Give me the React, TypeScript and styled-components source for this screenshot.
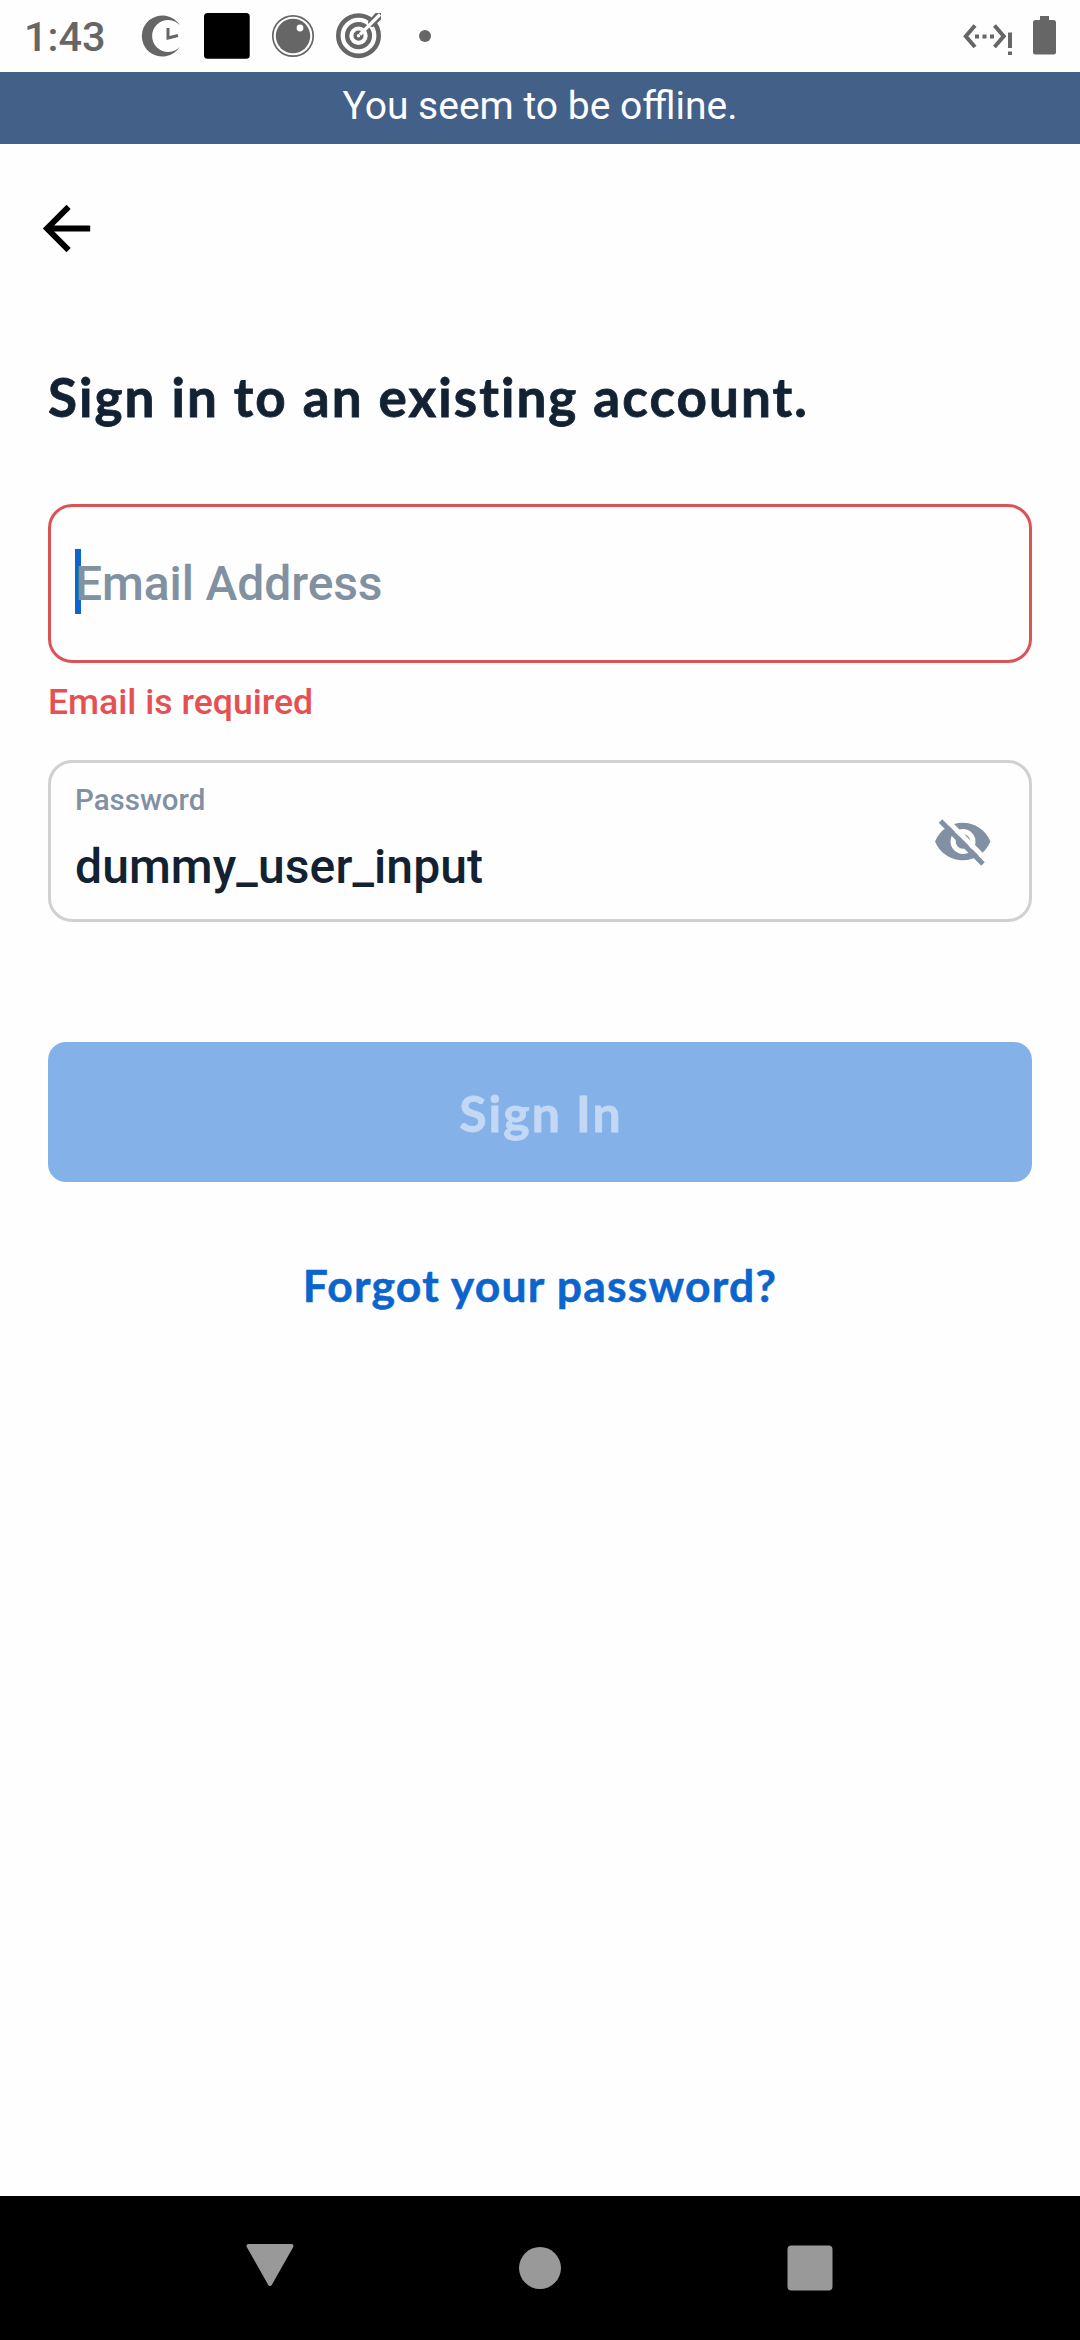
import React from "react";
import styled, { createGlobalStyle } from "styled-components";

const GlobalStyle = createGlobalStyle`
  *, *::before, *::after { box-sizing: border-box; }
  body { margin: 0; background: #fefefe; font-family: Roboto, sans-serif; }
`;

const rounded = `Lato, "Open Sans", sans-serif`;

const Screen = styled.div`
  width: 1080px;
  height: 2340px;
  display: flex;
  flex-direction: column;
  background: #fefefe;
  overflow: hidden;
`;

const StatusBar = styled.header`
  height: 72px;
  display: flex;
  align-items: center;
  justify-content: space-between;
  padding: 0 24px;
`;

const StatusGroup = styled.div`
  display: flex;
  align-items: center;
  height: 72px;
`;

const Clock = styled.span`
  width: 112px;
  padding-top: 2px;
  font-size: 41.5px;
  line-height: 50px;
  font-weight: 500;
  color: #666;
`;

const Banner = styled.div`
  height: 72px;
  display: flex;
  justify-content: center;
  background: #436088;
  color: #fdfeff;
  font-size: 39px;
  line-height: 69px;
  white-space: nowrap;
`;

const TopBar = styled.nav`
  height: 168px;
  display: flex;
  align-items: center;
  padding-left: 31px;
`;

const BackButton = styled.button`
  display: flex;
  padding: 0;
  border: 0;
  background: none;
`;

const Form = styled.main`
  flex: 1;
  display: flex;
  flex-direction: column;
  padding: 45px 48px 0;
`;

const Title = styled.h1`
  margin: 0 0 67px;
  font-family: ${rounded};
  font-size: 53px;
  line-height: 80px;
  font-weight: 700;
  letter-spacing: 2.05px;
  -webkit-text-stroke: 0.8px #132232;
  color: #132232;
  white-space: nowrap;
`;

const Field = styled.div<{ $invalid?: boolean }>`
  height: ${(p) => (p.$invalid ? 159 : 162)}px;
  display: flex;
  align-items: center;
  justify-content: space-between;
  padding: 0 38px 0 24px;
  border: 3px solid ${(p) => (p.$invalid ? "#dc5356" : "#cfd1d2")};
  border-radius: 24px;
`;

const FieldBody = styled.div`
  display: flex;
  flex-direction: column;
  padding-bottom: 5px;
`;

const Placeholder = styled.span`
  height: 65px;
  margin-bottom: 4px;
  border-left: 6px solid #0b65cd;
  font-size: 48px;
  line-height: 69px;
  font-weight: 500;
  letter-spacing: -0.1px;
  color: #8191a1;
  white-space: nowrap;
`;

const PlaceholderText = styled.span`
  margin-left: -6px;
`;

const FieldLabel = styled.label`
  font-size: 29.5px;
  line-height: 36px;
  font-weight: 500;
  color: #8191a3;
`;

const FieldValue = styled.span`
  margin-top: 21px;
  font-size: 48px;
  line-height: 56px;
  font-weight: 500;
  letter-spacing: 0.1px;
  color: #132232;
`;

const ErrorText = styled.p`
  margin: 18px 0 37px;
  font-size: 35.6px;
  line-height: 42px;
  font-weight: 500;
  color: #e65053;
`;

const SubmitButton = styled.button`
  height: 140px;
  margin-top: 120px;
  padding: 1px 0 0 2px;
  border: 0;
  border-radius: 18px;
  background: #84b1e8;
  color: #c2d8f5;
  font-family: ${rounded};
  font-size: 50px;
  line-height: 60px;
  font-weight: 700;
  letter-spacing: 2px;
  -webkit-text-stroke: 0.8px #c2d8f5;
`;

const ForgotLink = styled.a`
  align-self: center;
  margin-top: 76px;
  font-family: ${rounded};
  font-size: 44.5px;
  line-height: 54px;
  font-weight: 700;
  letter-spacing: 1.2px;
  -webkit-text-stroke: 0.5px #0b65cd;
  color: #0b65cd;
  white-space: nowrap;
`;

const SystemNav = styled.footer`
  height: 144px;
  display: grid;
  grid-template-columns: repeat(3, 270px);
  justify-content: center;
  align-items: center;
  justify-items: center;
  background: #000;
`;

const TriangleIcon = styled.svg`
  margin-bottom: 2px;
`;

const EyeIcon = styled.svg`
  margin-top: 4px;
`;

const NotificationIcons = () => (
  <svg width="300" height="72" viewBox="136 0 300 72" fill="#666">
    <path d="M180 25.3A20.6 20.6 0 1 0 180 46.7A16 16 0 1 1 180 25.3Z" />
    <path d="M168 28V38L178 35.5" fill="none" stroke="#666" strokeWidth="3" />
    <rect x="204" y="13" width="45.7" height="45.7" rx="3.5" fill="#000" />
    <circle cx="293" cy="36" r="20.2" fill="none" stroke="#666" strokeWidth="1.7" />
    <circle cx="293" cy="36" r="17.2" />
    <circle cx="300" cy="28" r="3.4" fill="#fff" />
    <g fill="none" stroke="#666">
      <circle cx="358.5" cy="35.7" r="20.2" strokeWidth="4.6" />
      <circle cx="358.5" cy="35.7" r="11.4" strokeWidth="4.4" />
      <circle cx="358.5" cy="35.7" r="3.4" strokeWidth="3.4" />
    </g>
    <path d="M368 21.5L375.500 13H381V19.500L373 27L368.500 26.500Z" />
    <path d="M360 34.500L380 14.500" stroke="#fefefe" strokeWidth="3.2" />
    <circle cx="425" cy="36" r="6" />
  </svg>
);

const SystemIcons = () => (
  <svg width="96" height="72" viewBox="960 0 96 72" fill="#666">
    <path
      d="M975 25.5L965.8 36.3L975 47M994.5 25.5L1003.7 36.3L994.5 47"
      fill="none"
      stroke="#666"
      strokeWidth="4"
    />
    <path d="M975 34.5h4v4h-4zM982.5 34.5h4v4h-4zM990 34.5h4v4h-4z" />
    <path d="M1008 32.5h4v15.5h-4zM1008 51.5h4v3.5h-4z" />
    <path d="M1040 16h9v4h4.500a2.500 2.500 0 0 1 2.500 2.500v29.500a2.500 2.500 0 0 1-2.500 2.500h-18a2.500 2.500 0 0 1-2.500-2.500v-29.500a2.500 2.500 0 0 1 2.500-2.500h4.500z" />
  </svg>
);

const BackIcon = () => (
  <svg width="71" height="71" viewBox="0 0 24 24">
    <path d="M20 11H7.83l5.59-5.59L12 4l-8 8 8 8 1.41-1.41L7.83 13H20v-2z" />
  </svg>
);

const HiddenIcon = () => (
  <EyeIcon width="56" height="50" viewBox="935 818 56 50">
    <path
      d="M935 841.5C940 829.5 951 822.7 962.7 822.7S985.4 829.5 990.4 841.5C985.4 853.5 974.4 860.2 962.7 860.2S940 853.5 935 841.5Z"
      fill="#8191a3"
    />
    <circle cx="963" cy="841.5" r="9.9" fill="none" stroke="#fefefe" strokeWidth="5.2" />
    <path d="M943.5 817L988 861.5" stroke="#fefefe" strokeWidth="5" />
    <path d="M940.5 821L983 864" stroke="#8191a3" strokeWidth="5" />
  </EyeIcon>
);

const App = () => (
  <>
    <GlobalStyle />
    <Screen>
      <StatusBar>
        <StatusGroup>
          <Clock>1:43</Clock>
          <NotificationIcons />
        </StatusGroup>
        <SystemIcons />
      </StatusBar>
      <Banner>You seem to be offline.</Banner>
      <TopBar>
        <BackButton aria-label="Back">
          <BackIcon />
        </BackButton>
      </TopBar>
      <Form>
        <Title>Sign in to an existing account.</Title>
        <Field $invalid>
          <Placeholder>
            <PlaceholderText>Email Address</PlaceholderText>
          </Placeholder>
        </Field>
        <ErrorText>Email is required</ErrorText>
        <Field>
          <FieldBody>
            <FieldLabel>Password</FieldLabel>
            <FieldValue>dummy_user_input</FieldValue>
          </FieldBody>
          <HiddenIcon />
        </Field>
        <SubmitButton>Sign In</SubmitButton>
        <ForgotLink>Forgot your password?</ForgotLink>
      </Form>
      <SystemNav>
        <TriangleIcon width="48" height="48" viewBox="246 2243 48 48">
          <path
            d="M248.5 2246H291.5L270 2284Z"
            fill="#999"
            stroke="#999"
            strokeWidth="4"
            strokeLinejoin="round"
          />
        </TriangleIcon>
        <svg width="42" height="42" viewBox="0 0 42 42">
          <circle cx="21" cy="21" r="21" fill="#999" />
        </svg>
        <svg width="46" height="46" viewBox="0 0 46 46">
          <rect x="0.5" y="0.5" width="45" height="45" rx="4" fill="#999" />
        </svg>
      </SystemNav>
    </Screen>
  </>
);

export default App;
